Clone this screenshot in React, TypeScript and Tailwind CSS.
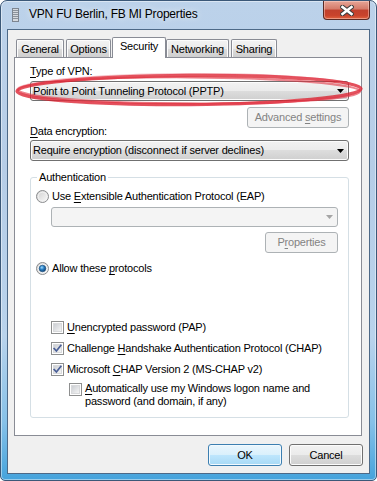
import React from "react";

const btnNormal =
  "border border-[#707070] bg-[linear-gradient(to_bottom,#f2f2f2_0%,#ebebeb_50%,#dddddd_50%,#cfcfcf_100%)] shadow-[inset_0_0_0_1px_#fcfcfc]";
const btnDisabled = "border border-[#adb2b5] bg-[#f4f4f4] text-[#838383]";
const btnDefault =
  "border border-[#3c7fb1] bg-[linear-gradient(to_bottom,#eaf6fd_0%,#d9f0fc_50%,#bee6fd_50%,#a7d9f5_100%)] shadow-[inset_0_0_0_1px_#f2faff]";

function U({ children }: { children: React.ReactNode }) {
  return <span className="underline underline-offset-[2px] decoration-[1px]">{children}</span>;
}

function Arrow({ color }: { color: string }) {
  return (
    <svg width="7" height="4" viewBox="0 0 7 4" className="shrink-0">
      <path d="M0 0H7L3.5 4Z" fill={color} />
    </svg>
  );
}

function Combo({ text, disabled, className }: { text?: string; disabled?: boolean; className: string }) {
  return (
    <div
      className={`flex items-center justify-between rounded-[3px] pl-[2px] pr-[4px] ${
        disabled ? "border border-[#adb2b5] bg-[#f4f4f4]" : btnNormal
      } ${className}`}
    >
      <span className="whitespace-nowrap">{text}</span>
      <Arrow color={disabled ? "#a5a5a5" : "#000000"} />
    </div>
  );
}

function Radio({ checked }: { checked?: boolean }) {
  return (
    <svg width="13" height="13" viewBox="0 0 13 13" className="shrink-0">
      <defs>
        <linearGradient id={checked ? "rgc" : "rgu"} x1="0" y1="0" x2="1" y2="1">
          <stop offset="0" stopColor="#cfcfcf" />
          <stop offset="1" stopColor="#fbfbfb" />
        </linearGradient>
        <radialGradient id="dot" cx="0.4" cy="0.35" r="0.7">
          <stop offset="0" stopColor="#9fdcff" />
          <stop offset="0.45" stopColor="#2a7fc4" />
          <stop offset="1" stopColor="#0d3b6a" />
        </radialGradient>
      </defs>
      <circle cx="6.5" cy="6.5" r="6" fill={`url(#${checked ? "rgc" : "rgu"})`} stroke="#8a8c8e" strokeWidth="1" />
      <circle cx="6.5" cy="6.5" r="4.3" fill="none" stroke="#f2f2f2" strokeWidth="1" />
      {checked && <circle cx="6.5" cy="6.5" r="3.3" fill="url(#dot)" stroke="#1a4d7c" strokeWidth="0.6" />}
    </svg>
  );
}

function Check({ checked }: { checked?: boolean }) {
  return (
    <svg width="13" height="13" viewBox="0 0 13 13" className="shrink-0">
      <defs>
        <linearGradient id="cbg" x1="0" y1="0" x2="1" y2="1">
          <stop offset="0" stopColor="#c9ccd1" />
          <stop offset="1" stopColor="#f7f7f7" />
        </linearGradient>
      </defs>
      <rect x="0.5" y="0.5" width="12" height="12" fill="#ffffff" stroke="#8e8f8f" />
      <rect x="2.5" y="2.5" width="8" height="8" fill="url(#cbg)" stroke="#d8d9db" strokeWidth="1" />
      {checked && (
        <path d="M3.2 6.6 L5.4 9 L9.8 3.4" fill="none" stroke="#4a5f97" strokeWidth="1.7" strokeLinecap="square" />
      )}
    </svg>
  );
}

function Tab({ label, selected, className }: { label: string; selected?: boolean; className: string }) {
  return (
    <div
      className={`flex justify-center rounded-t-[2px] border-x border-t border-[#898c95] ${
        selected
          ? "relative z-10 h-[21px] -mb-[1px] bg-white pt-[1px]"
          : "h-[18px] pt-[2px] bg-[linear-gradient(to_bottom,#f3f3f3_0%,#ebebeb_50%,#dddddd_50%,#cfcfcf_100%)] shadow-[inset_1px_1px_0_#fcfcfc,inset_-1px_0_0_#fcfcfc]"
      } ${className}`}
    >
      {label}
    </div>
  );
}

export default function App() {
  return (
    <div className="w-[377px] h-[481px] bg-white">
      <div className="relative flex flex-col w-[377px] h-[481px] rounded-t-[7px] rounded-b-[5px] border border-[#3b5878] bg-[linear-gradient(to_bottom,#bcd2ea_0%,#b6cde7_35%,#b9d3ec_70%,#86c1e8_88%,#45a3dc_100%)] shadow-[inset_0_0_0_1px_rgba(255,255,255,0.45)] font-['Liberation_Sans',Arial,sans-serif] text-[11px] leading-[15px] tracking-[-0.2px] text-black">
        {/* Title bar */}
        <div className="flex h-[28px] items-start">
          <svg width="7" height="14" viewBox="0 0 7 14" className="ml-[11px] mt-[7px] shrink-0">
            <rect x="0.5" y="0.5" width="6" height="13" fill="#d5d9de" stroke="#7d8590" />
            <path d="M1 2.5H6M1 4.5H6M1 6.5H6M1 8.5H6M1 10.5H6" stroke="#8b929b" strokeWidth="1" />
          </svg>
          <div className="ml-[10px] mt-[6px] text-[12px] leading-[15px] [text-shadow:0_0_6px_rgba(255,255,255,0.9)]">
            VPN FU Berlin, FB MI Properties
          </div>
          <div className="ml-auto mr-[6px] flex h-[19px] w-[47px] items-center justify-center rounded-b-[4px] border border-t-0 border-[#5a2a24] bg-[linear-gradient(to_bottom,#e6a597_0%,#d47a69_45%,#c1402d_50%,#c9432c_80%,#e0633f_100%)] shadow-[inset_0_0_0_1px_rgba(255,220,210,0.45)]">
            <svg width="14" height="11" viewBox="0 0 14 11">
              <path d="M2.5 2 L11.5 9 M11.5 2 L2.5 9" stroke="#3a3a3a" strokeWidth="4.6" strokeLinecap="square" />
              <path d="M2.5 2 L11.5 9 M11.5 2 L2.5 9" stroke="#ffffff" strokeWidth="2.6" strokeLinecap="square" />
            </svg>
          </div>
        </div>

        {/* Client area */}
        <div className="mx-[6px] flex h-[445px] flex-col border border-[#4d6987] bg-[#f0f0f0] pt-[7px]">
          <div className="ml-[6px] mr-[7px] flex flex-col">
            {/* Tabs */}
            <div className="flex h-[20px] items-end pl-[2px]">
              <Tab label="General" className="w-[48px]" />
              <Tab label="Options" className="ml-[2px] w-[45px]" />
              <Tab label="Security" selected className="ml-[1px] w-[54px]" />
              <Tab label="Networking" className="w-[63px]" />
              <Tab label="Sharing" className="ml-[2px] w-[46px]" />
            </div>

            {/* Panel */}
            <div className="flex h-[379px] flex-col border border-[#898c95] bg-white pl-[15px] pr-[12px]">
              <div className="mt-[6px] h-[15px]">
                <U>T</U>ype of VPN:
              </div>
              <Combo text="Point to Point Tunneling Protocol (PPTP)" className="mt-[2px] h-[20px]" />
              <div className="mt-[6px] flex justify-end">
                <div className={`flex h-[21px] w-[102px] items-center justify-center rounded-[3px] ${btnDisabled}`}>
                  <span>
                    Advanced <U>s</U>ettings
                  </span>
                </div>
              </div>
              <div className="-mt-[4px] h-[15px]">
                <U>D</U>ata encryption:
              </div>
              <Combo text="Require encryption (disconnect if server declines)" className="mt-[1px] h-[21px]" />

              {/* Group box */}
              <div className="relative mt-[16px] flex h-[241px] flex-col rounded-[3px] border border-[#d5dfe5] pl-[5px] pr-[10px]">
                <span className="absolute -top-[8px] left-[6px] bg-white px-[2px] leading-[15px]">Authentication</span>
                <div className="mt-[11px] flex h-[15px] items-center gap-[3px]">
                  <Radio />
                  <span>
                    Use <U>E</U>xtensible Authentication Protocol (EAP)
                  </span>
                </div>
                <Combo disabled className="ml-[15px] mt-[3px] h-[20px]" />
                <div className="mt-[5px] flex justify-end">
                  <div className={`flex h-[21px] w-[73px] items-center justify-center rounded-[3px] ${btnDisabled}`}>
                    <span>
                      P<U>r</U>operties
                    </span>
                  </div>
                </div>
                <div className="mt-[8px] flex h-[15px] items-center gap-[3px]">
                  <Radio checked />
                  <span>
                    Allow these <U>p</U>rotocols
                  </span>
                </div>

                <div className="ml-[15px] mt-[44px] flex h-[15px] items-center gap-[3px]">
                  <Check />
                  <span>
                    <U>U</U>nencrypted password (PAP)
                  </span>
                </div>
                <div className="ml-[15px] mt-[6px] flex h-[15px] items-center gap-[3px]">
                  <Check checked />
                  <span>
                    Challenge <U>H</U>andshake Authentication Protocol (CHAP)
                  </span>
                </div>
                <div className="ml-[15px] mt-[6px] flex h-[15px] items-center gap-[3px]">
                  <Check checked />
                  <span>
                    Microsoft <U>C</U>HAP Version 2 (MS-CHAP v2)
                  </span>
                </div>
                <div className="ml-[33px] mt-[5px] flex items-start gap-[3px]">
                  <div className="mt-[1px]">
                    <Check />
                  </div>
                  <span className="leading-[13px]">
                    <U>A</U>utomatically use my Windows logon name and
                    <br />
                    password (and domain, if any)
                  </span>
                </div>
              </div>
            </div>
          </div>

          {/* Buttons */}
          <div className="mr-[6px] mt-[8px] flex justify-end gap-[7px]">
            <div className={`flex h-[22px] w-[74px] items-center justify-center rounded-[3px] ${btnDefault}`}>OK</div>
            <div className={`flex h-[22px] w-[74px] items-center justify-center rounded-[3px] ${btnNormal}`}>Cancel</div>
          </div>
        </div>

        {/* Red annotation ellipse */}
        <svg
          width="362"
          height="46"
          viewBox="0 0 362 46"
          className="pointer-events-none absolute left-[7px] top-[65px]"
        >
          <defs>
            <filter id="soft" x="-5%" y="-30%" width="110%" height="160%">
              <feGaussianBlur stdDeviation="0.7" />
            </filter>
          </defs>
          <g filter="url(#soft)" fill="none">
            <ellipse cx="181" cy="24" rx="172" ry="14.5" stroke="rgba(218,28,42,0.75)" strokeWidth="3.4" transform="rotate(-0.4 181 24)" />
            <ellipse cx="181" cy="24.5" rx="171" ry="13.2" stroke="rgba(225,50,65,0.6)" strokeWidth="2.2" transform="rotate(0.3 181 24)" />
            <ellipse cx="181" cy="23.5" rx="172.5" ry="15.6" stroke="rgba(230,70,85,0.35)" strokeWidth="1.6" transform="rotate(-0.2 181 24)" />
          </g>
        </svg>
      </div>
    </div>
  );
}
